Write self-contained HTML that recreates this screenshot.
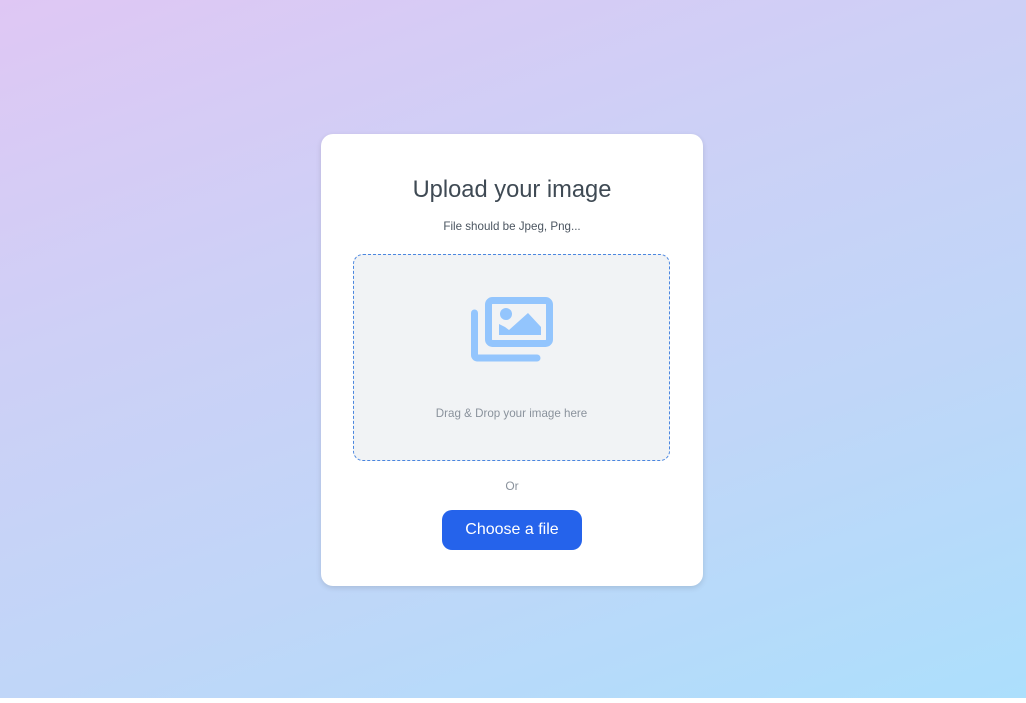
<!DOCTYPE html>
<html><head><style>
html,body{margin:0;padding:0;}
body{width:1026px;height:703px;background:#fff;font-family:"Liberation Sans",Roboto,sans-serif;position:relative;overflow:hidden}
.bg{position:absolute;left:0;top:0;width:1026px;height:698px;background:linear-gradient(160deg,#dfc7f4 0%,#cdd0f6 35%,#c0d6f8 65%,#acdffc 100%)}
.card{position:absolute;left:321px;top:134px;width:382px;height:452px;background:#fff;border-radius:12px;box-shadow:0 2px 6px rgba(0,0,0,.12)}
h1{position:absolute;top:43px;left:0;width:100%;margin:0;text-align:center;font-weight:normal;font-size:23.7px;color:#3f4a54}
.sub{position:absolute;top:86px;width:100%;text-align:center;font-size:11.6px;color:#4b5560}
.drop{position:absolute;left:32px;top:120px;width:315px;height:205px;background:#f1f3f5;border:1px dashed #4a86e0;border-radius:10px}
.drop svg{position:absolute;left:117px;top:42px}
.dt{position:absolute;top:152px;width:100%;text-align:center;font-size:11.6px;color:#8a929c}
.or{position:absolute;top:345px;width:100%;text-align:center;font-size:12px;color:#8a929c}
.btn{position:absolute;left:121px;top:376px;width:140px;height:40px;background:#2563eb;border-radius:10px;color:#fff;font-size:16px;line-height:40px;text-align:center}
</style></head><body>
<div class="bg"></div>
<div class="card">
<h1>Upload your image</h1>
<div class="sub">File should be Jpeg, Png...</div>
<div class="drop">
<svg width="84" height="66" viewBox="0 0 84 66">
<g fill="none" stroke="#93c5fd" stroke-width="7" stroke-linejoin="round" stroke-linecap="round">
<rect x="17.5" y="3.5" width="61" height="43" rx="4"/>
<path d="M3.5 16 V58 a3 3 0 0 0 3 3 H66"/>
</g>
<circle cx="35" cy="17" r="6" fill="#93c5fd"/>
<path d="M28 38 V27 L34 30 L38 33 L57 16 L70 30 V38 Z" fill="#93c5fd"/>
</svg>
<div class="dt">Drag &amp; Drop your image here</div>
</div>
<div class="or">Or</div>
<div class="btn">Choose a file</div>
</div>
</body></html>
